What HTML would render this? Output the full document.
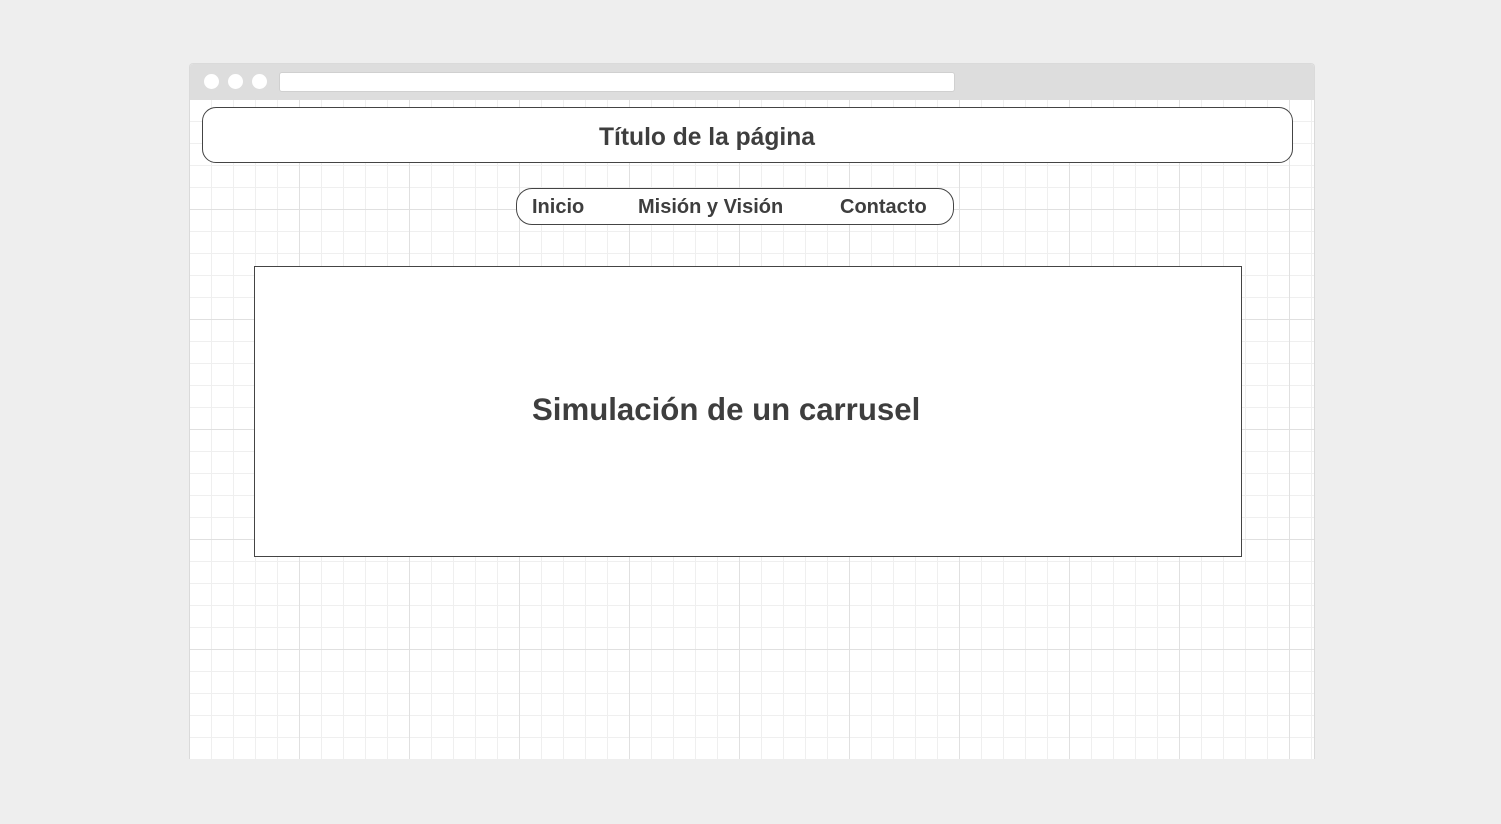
<!DOCTYPE html>
<html><head><meta charset="utf-8"><style>
html,body{margin:0;padding:0;width:1501px;height:824px;background:#eeeeee;overflow:hidden;font-family:"Liberation Sans",sans-serif;}
.frame{position:absolute;left:189px;top:63px;width:1124px;height:695px;border:1px solid #dadada;border-bottom:none;border-radius:4px 4px 0 0;overflow:hidden;background:#fff;}
.bar{position:absolute;left:0;top:0;width:100%;height:36px;background:#dddddd;}
.dot{position:absolute;top:10px;width:15px;height:15px;border-radius:50%;background:#fff;}
.url{position:absolute;left:89px;top:8px;width:676px;height:20px;background:#fff;border-radius:3px;border:1px solid #d0d0d0;box-sizing:border-box;}
.grid{position:absolute;left:0;top:36px;width:100%;height:660px;
background-image:
linear-gradient(to right,#e0e0e0 1px,transparent 1px),
linear-gradient(to bottom,#e0e0e0 1px,transparent 1px),
linear-gradient(to right,#efefef 1px,transparent 1px),
linear-gradient(to bottom,#efefef 1px,transparent 1px);
background-size:110px 110px,110px 110px,22px 22px,22px 22px;background-position:-1px -1px;}
.title{position:absolute;left:12px;top:43px;width:1089px;height:54px;border:1px solid #444;border-radius:14px;background:#fff;}
.title span{position:absolute;left:396px;top:16px;font-size:24.6px;font-weight:bold;color:#3e3e3e;}
.nav{position:absolute;left:326px;top:124px;width:436px;height:35px;border:1px solid #444;border-radius:16px;background:#fff;font-size:20px;font-weight:bold;color:#3e3e3e;}
.nav span{position:absolute;top:7px;}
.car{position:absolute;left:64px;top:202px;width:986px;height:289px;border:1px solid #444;background:#fff;}
.car span{position:absolute;left:277px;top:125px;font-size:31.2px;font-weight:bold;color:#3e3e3e;}
</style></head><body>
<div class="frame">
<div class="bar"><div class="dot" style="left:14px"></div><div class="dot" style="left:38px"></div><div class="dot" style="left:62px"></div><div class="url"></div></div>
<div class="grid"></div>
<div class="title"><span>Título de la página</span></div>
<div class="nav"><span style="left:15px">Inicio</span><span style="left:121px">Misión y Visión</span><span style="left:323px">Contacto</span></div>
<div class="car"><span>Simulación de un carrusel</span></div>
</div>
</body></html>
